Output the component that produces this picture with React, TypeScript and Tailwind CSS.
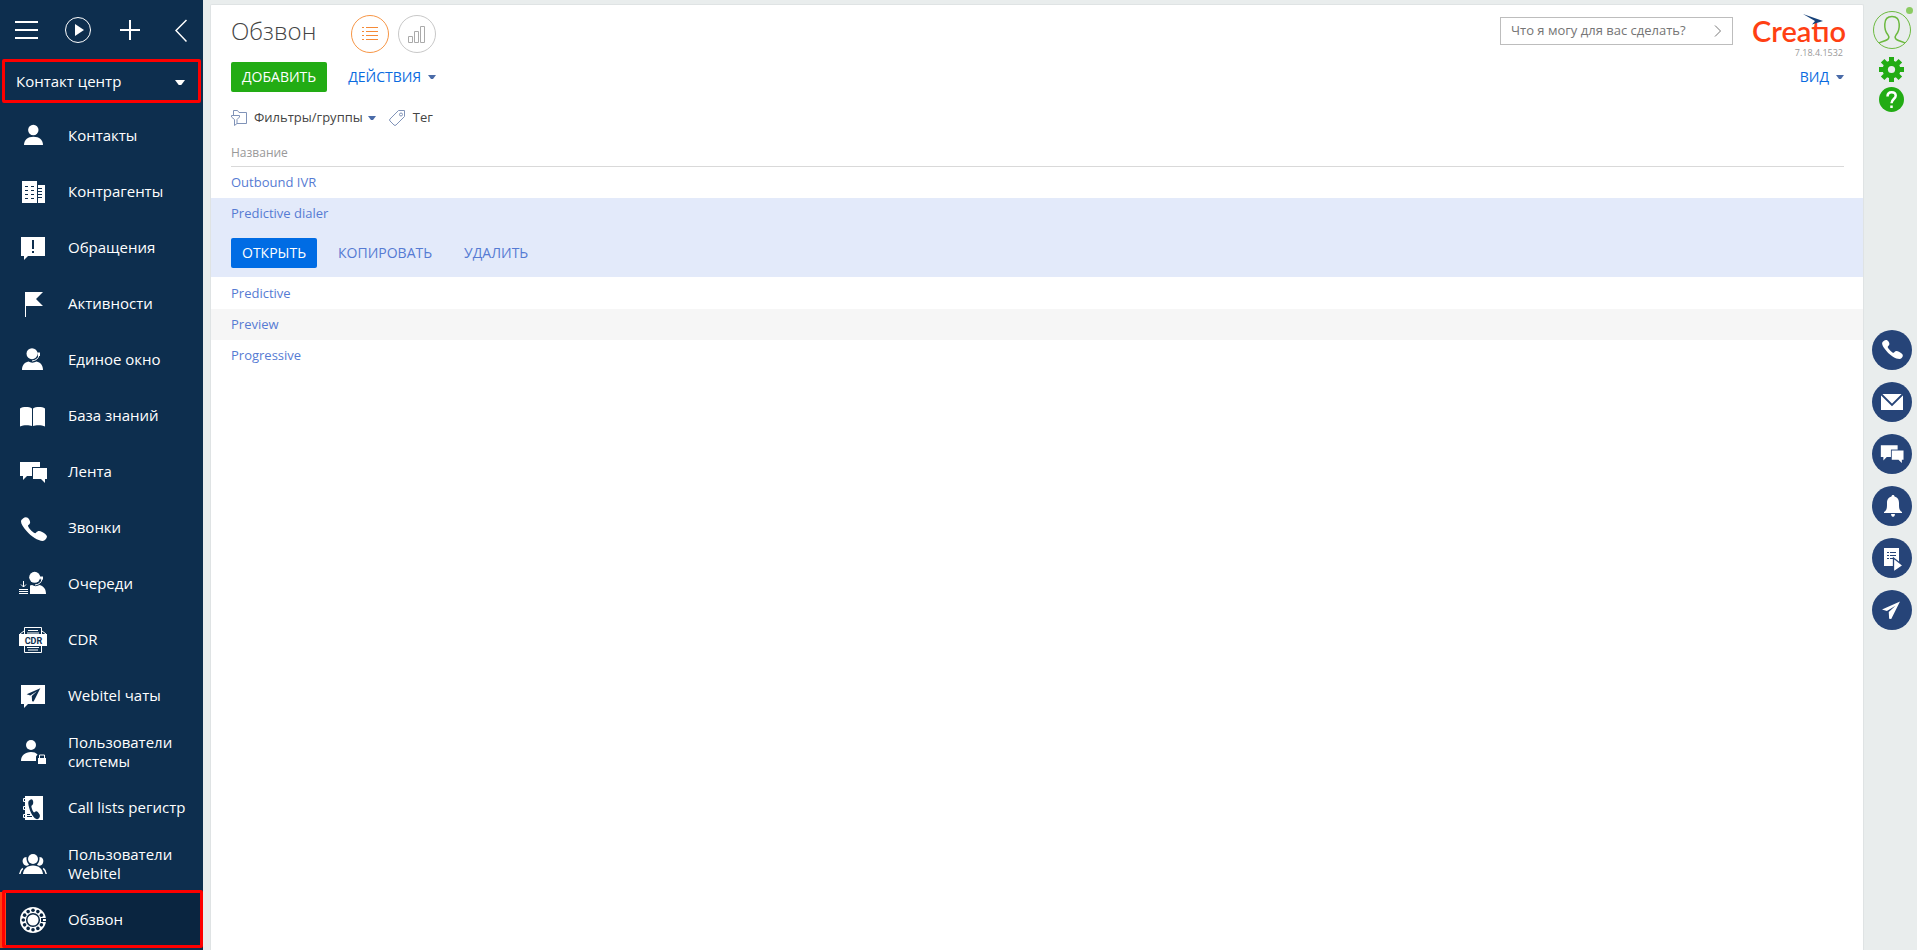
import React from 'react';

type IconProps = { children: React.ReactNode };

const NavIcon: React.FC<IconProps> = ({ children }) => (
  <svg className="w-7 h-7 shrink-0" viewBox="0 0 28 28" fill="#fff" aria-hidden="true">
    {children}
  </svg>
);

const PHONE = 'M4 4.5C6 2.6 8.6 2.6 10.2 5.4c1.4 2.4 1.3 4-.8 5.6-.7.6-.4 1.5.8 3.2 1.3 1.8 2.9 3.3 4.7 4.5 1 .6 1.7.6 2.3-.2 1.6-1.9 3.3-2 5.9-.6 2.9 1.6 5.3 3.3 4.8 5.2-.4 1.7-2 3.9-4.2 3.9-4.7 0-11.7-4.6-15.7-9.4C4.2 13 2 9.8 2 7.4 2 6.2 2.9 5.4 4 4.5z';
const PLANE = 'M26 2L2 12.5l6.5 2.3L20 7.5 11 16l.5 9 2.8.3L26 2z';
const DARK = '#0d2e4e';

const dialHoles = Array.from({ length: 11 }, (_, i) => {
  const a = ((i + 1) * Math.PI) / 6;
  return { x: 14 + 9.7 * Math.cos(a), y: 14 + 9.7 * Math.sin(a) };
});

const Chats = ({ gap }: { gap: string }) => (
  <>
    <path d="M1 4h20v14H8l-4 4v-4H1z" />
    <path d="M13 9h16v13H13z" fill={gap} />
    <path d="M14 10h14v11h-2v4l-4-4h-8z" />
  </>
);

const NAV = [
  {
    label: 'Контакты',
    icon: <><circle cx="14.3" cy="8" r="5.2" /><path d="M5 23c0-5 3.5-8.3 9.5-8.3S24 18 24 23z" /></>,
  },
  {
    label: 'Контрагенты',
    icon: (
      <>
        <path d="M3 3h15v22H3zM19 7h7v18h-7z" />
        <path
          d="M6 8.5h3m3 0h3M6 12.5h3m3 0h3M6 16.5h3m3 0h3M6 20.5h3m3 0h3M19 10.5h4m-4 3h4m-4 3h4m-4 3h4"
          stroke={DARK}
        />
      </>
    ),
  },
  {
    label: 'Обращения',
    icon: <><path d="M2 3h24v19H9l-4 4v-4H2z" /><path d="M13 6h2v9h-2zM13 17h2v2h-2z" fill={DARK} /></>,
  },
  { label: 'Активности', icon: <path d="M6 2h18l-7 7 7 7H7v11H6z" /> },
  {
    label: 'Единое окно',
    icon: (
      <>
        <circle cx="13" cy="7.7" r="5.5" />
        <path d="M3 24c0-5 2.5-7.5 6.5-8.5 2 1.5 5.5 1.5 8 0C21.5 16.5 24 19 24 24z" />
        <path d="M18 6.5h3V10h-2z" />
        <path d="M20 9c-.5 3.5-3 5.5-7 6" fill="none" stroke="#fff" />
      </>
    ),
  },
  {
    label: 'База знаний',
    icon: <path d="M1 6.5C4 4.6 10 4.6 13 6.5V24c-3-1-9-1-12 .5zM14 6.5c3-1.9 9-1.9 12 0v18c-3-1.5-9-1.5-12-.5z" />,
  },
  { label: 'Лента', icon: <Chats gap={DARK} /> },
  { label: 'Звонки', icon: <path d={PHONE} /> },
  {
    label: 'Очереди',
    icon: (
      <>
        <circle cx="15.7" cy="7.3" r="5.5" />
        <path d="M11 24v-8.5l2-.5c2 1.5 5.5 1.5 7.5 0 4.5 1.5 6.5 4 6.5 9z" />
        <path d="M20.5 6.5H24v3h-2.5z" />
        <path d="M23 9c-.5 3.5-3 5.5-7 6M4.5 11v6M2 14.5L4.5 17 7 14.5M0 19.5h9M0 21.5h9M0 23.5h9" fill="none" stroke="#fff" />
      </>
    ),
  },
  {
    label: 'CDR',
    icon: (
      <>
        <path d="M5.5 1.5h17v25h-17zM9 4.5h10M8 7h12M8 21.5h12M9 24h10M1 8l4-3M27 8l-4-3" fill="none" stroke="#fff" />
        <path d="M0 8h28v12H0z" />
        <text x="14.5" y="17.5" fontSize="9" fontWeight="700" fontFamily="Roboto, sans-serif" textAnchor="middle" fill={DARK}>CDR</text>
      </>
    ),
  },
  {
    label: 'Webitel чаты',
    icon: (
      <>
        <path d="M2 3h24v19H9l-4 4v-4H2z" />
        <path d={PLANE} fill={DARK} transform="translate(6.5 5) scale(.57)" />
      </>
    ),
  },
  {
    label: 'Пользователи системы',
    icon: (
      <>
        <circle cx="12" cy="7" r="5" />
        <path d="M2 23c0-5.5 4-9 10-9 3 0 5 .8 6.5 2.5L17 18.5V23zM19 20h8v6h-8z" />
        <path d="M20.5 20v-3h5v3" fill="none" stroke="#fff" />
      </>
    ),
  },
  {
    label: 'Call lists регистр',
    icon: (
      <>
        <path d="M6 2h18v24H6z" />
        <path d="M6 4.5H4.5v3H6M6 12.5H4.5v3H6M6 20.5H4.5v3H6" fill="none" stroke="#fff" />
        <path d={PHONE} fill={DARK} transform="translate(9.5 2) rotate(12) scale(.55 .78)" />
        <path d="M8 20.5h3M8 22.5h5" stroke={DARK} />
      </>
    ),
  },
  {
    label: 'Пользователи Webitel',
    icon: (
      <>
        <circle cx="14" cy="9" r="5" />
        <path d="M4 24c.5-5 4-8.5 10-8.5S23.5 19 24 24zM7.5 7C4 7 3 10.5 4 13c1 2.5 3 3 4.5 2.5 1-.3 1.5-1 1.5-1C8 12.5 7.3 10 7.5 7zM20.5 7c3.5 0 4.5 3.5 3.5 6-1 2.5-3 3-4.5 2.5-1-.3-1.5-1-1.5-1 2-2 2.7-4.5 2.5-7.5z" />
        <path d="M.8 24c.3-2.5 1.5-4.5 3-5.7M27.2 24c-.3-2.5-1.5-4.5-3-5.7" fill="none" stroke="#fff" strokeWidth="1.5" />
      </>
    ),
  },
  {
    label: 'Обзвон',
    active: true,
    icon: (
      <>
        <circle cx="14" cy="14" r="13" />
        <circle cx="14" cy="14" r="6.3" fill="none" stroke="#0a2540" strokeWidth="1.5" />
        {dialHoles.map((h) => (
          <circle key={`${h.x}-${h.y}`} cx={h.x} cy={h.y} r="1.8" fill="#0a2540" />
        ))}
        <path d="M22 12h6v1h-4v2h4v1h-6z" fill="#0a2540" />
      </>
    ),
  },
];

const CHANNELS = [
  { label: 'Звонки', icon: <path d={PHONE} transform="translate(2.5 1.5) scale(.8)" /> },
  {
    label: 'Почта',
    icon: <><path d="M3 6h22v16H3z" /><path d="M3 6l11 11L25 6" fill="none" stroke="#264478" strokeWidth="1.8" /></>,
  },
  { label: 'Чаты', icon: <g transform="translate(2 2) scale(.84)"><Chats gap="#264478" /></g> },
  {
    label: 'Уведомления',
    icon: <path d="M15 3c1 0 1.5.7 1.5 1.5C20 5.5 21 8 21 11c0 5 0 7 3 9v1H6v-1c3-2 3-4 3-9 0-3 1-5.5 4.5-6.5C13.500 3.700 14 3 15 3zM13 22h4l-.5 2-1.500 1-1.500-1z" />,
  },
  {
    label: 'Процессы',
    icon: (
      <>
        <path d="M6 4h15v18H6z" />
        <path d="M9 8.5h2m1 0h6M9 11.5h2m1 0h6M9 14.5h2m1 0h4" stroke="#264478" />
        <path d="M15.5 14v14l9.5-6.500z" stroke="#264478" strokeWidth="1.3" />
      </>
    ),
  },
  { label: 'Сообщения', icon: <path d={PLANE} transform="translate(2.5 4) scale(.75)" /> },
];

const Caret: React.FC<{ className: string }> = ({ className }) => (
  <svg className={className} viewBox="0 0 8 4" fill="currentColor" aria-hidden="true">
    <path d="M0 0h8L5 4H3z" />
  </svg>
);

const Sidebar: React.FC = () => (
  <aside className="w-[203px] shrink-0 bg-[#0d2e4e] text-white">
    <div className="h-[59px] flex items-center pl-[15px] pr-4 justify-between">
      <button aria-label="Меню">
        <svg className="w-6 h-7 block" viewBox="0 0 24 28" stroke="#fff" strokeWidth="2"><path d="M0 6h23M0 14h23M0 22h23" /></svg>
      </button>
      <button aria-label="Запустить процесс">
        <svg className="w-7 h-7 block" viewBox="0 0 28 28" fill="none">
          <circle cx="14" cy="14" r="12.5" stroke="#fff" />
          <path d="M11 8v12l9-6z" fill="#fff" />
        </svg>
      </button>
      <button aria-label="Добавить">
        <svg className="w-6 h-7 block" viewBox="0 0 24 28" stroke="#fff" strokeWidth="2"><path d="M2 14h20M12 4v20" /></svg>
      </button>
      <button aria-label="Свернуть" className="ml-2">
        <svg className="w-3 h-7 block" viewBox="0 0 12 28" fill="none" stroke="#fff" strokeWidth="1.5"><path d="M11.5 4L1 14.500l10.500 11" /></svg>
      </button>
    </div>
    <div className="relative mx-0.5 mb-[5px]">
      <select
        aria-label="Рабочее место"
        className="block w-full h-11 appearance-none rounded-xs border-[3px] border-[#fe0000] bg-transparent pt-px pl-[11px] text-[15px] outline-none"
      >
        <option>Контакт центр</option>
      </select>
      <Caret className="absolute right-4 top-[21px] w-2.5 h-[5px] pointer-events-none" />
    </div>
    <nav>
      {NAV.map((item) => (
        <a
          key={item.label}
          href="#"
          className={
            item.active
              ? 'relative h-14 flex items-center gap-[21px] pl-[19px] pr-2 bg-[#0a2540] text-[15px] leading-[19px]'
              : 'h-14 flex items-center gap-[21px] pl-[19px] pr-2 text-[15px] leading-[19px]'
          }
        >
          {item.active && (
            <>
              <span className="absolute left-0 inset-y-0 w-1.5 bg-[#ff4013]" />
              <span className="absolute left-0.5 right-0 -top-0.5 bottom-0 rounded-xs border-[3px] border-[#fe0000]" />
            </>
          )}
          <NavIcon>{item.icon}</NavIcon>
          <span className="pb-px">{item.label}</span>
        </a>
      ))}
    </nav>
  </aside>
);

const Logo: React.FC = () => (
  <div className="relative w-[92px]">
    <div className="font-['Lato',sans-serif] font-semibold text-[29px] leading-7 text-[#ff4013]">Creatio</div>
    {/* the bird stands in for the dot of the "i" */}
    <svg className="absolute left-[50px] -top-1 w-7 h-3.5" viewBox="0 0 28 14" aria-hidden="true">
      <path d="M17 2h11v11H17z" fill="#fff" />
      <path d="M1 1l20 7-11 3.500 3-3.500z" fill="#17427a" />
    </svg>
    <div className="text-[9px] leading-3 mt-0.5 pr-px text-right text-[#999]">7.18.4.1532</div>
  </div>
);

const Header: React.FC = () => (
  <header className="pl-5 pr-[19px]">
    <div className="h-[57px] flex items-start">
      <h1 className="w-[85px] text-2xl leading-[34px] mt-[9px] font-light text-[#444]">Обзвон</h1>
      <button aria-label="Реестр" className="ml-[35px] mt-2.5 w-[38px] h-[38px] rounded-full border border-[#f79646] text-[#f58a37]">
        <svg className="w-9 h-9" viewBox="0 0 36 36" stroke="currentColor" fill="none">
          <path d="M10 11.5h2m2 0h12M10 15.5h2m2 0h12M10 19.5h2m2 0h12M10 23.5h2m2 0h12" />
        </svg>
      </button>
      <button aria-label="Аналитика" className="ml-[9px] mt-2.5 w-[38px] h-[38px] rounded-full border border-[#c8c8c8] text-[#aaa]">
        <svg className="w-9 h-9" viewBox="0 0 36 36" stroke="currentColor" fill="none">
          <path d="M9.5 20.5h4v6h-4zM15.5 15.5h4v11h-4zM21.5 10.5h4v16h-4z" />
        </svg>
      </button>
      <div className="ml-auto mt-3 w-[233px] h-7 flex items-center border border-[#bdbdbd] px-2.5">
        <input
          aria-label="Командная строка"
          placeholder="Что я могу для вас сделать?"
          className="min-w-0 flex-1 text-[13px] outline-none placeholder:text-[#757575]"
        />
        <svg className="w-2 h-3" viewBox="0 0 8 12" fill="none" stroke="#777"><path d="M1 .5L6.5 6 1 11.5" /></svg>
      </div>
      <div className="ml-[19px] mt-3"><Logo /></div>
    </div>

    <div className="h-[30px] flex items-center text-sm text-[#0a6be0]">
      <button className="h-[30px] px-[11px] rounded-xs bg-[#22ac14] text-white">ДОБАВИТЬ</button>
      <button className="ml-[21px] flex items-center gap-[7px]">
        ДЕЙСТВИЯ <Caret className="w-2 h-1 text-[#4a6ba8]" />
      </button>
      <button className="ml-auto flex items-center gap-[7px]">
        ВИД <Caret className="w-2 h-1 text-[#4a6ba8]" />
      </button>
    </div>

    <div className="h-[52px] flex items-center text-[13px] text-[#444]">
      <button className="flex items-center">
        <svg className="w-4 h-4 mr-[7px]" viewBox="0 0 16 16" fill="none" stroke="#8093b8">
          <path d="M2.5 5V.5h4l1.500 2h7.500v11H6" />
          <path d="M.5 5.5h8V7L6 9.500v4l-2.500 2v-6L.5 7z" fill="#fff" />
        </svg>
        Фильтры/группы
        <Caret className="w-2 h-1 ml-[5px] text-[#4a6ba8]" />
      </button>
      <button className="ml-[13px] flex items-center">
        <svg className="w-4 h-4 mr-2" viewBox="0 0 16 16" fill="none" stroke="#8093b8">
          <path d="M9.500.500h6v6L7 15q-1 1-2 0L1 11q-1-1 0-2z" />
          <circle cx="12" cy="4.5" r="1.5" />
        </svg>
        Тег
      </button>
    </div>
  </header>
);

const RowLink: React.FC<{ name: string }> = ({ name }) => (
  <a href="#" className="block h-[31px] leading-[31px] text-[13px]">{name}</a>
);

const Registry: React.FC = () => (
  <table className="w-full text-left text-[#567bd3]">
    <thead>
      <tr>
        <th className="pl-5 pr-[19px] font-normal">
          <div className="h-[23px] leading-[18px] border-b border-[#d9d9d9] text-xs text-[#999]">Название</div>
        </th>
      </tr>
    </thead>
    <tbody>
      <tr><td className="px-5"><RowLink name="Outbound IVR" /></td></tr>
      <tr className="bg-[#e3eafa]">
        <td className="px-5">
          <RowLink name="Predictive dialer" />
          <div className="h-12 pt-[9px] flex text-sm">
            <button className="h-[30px] px-[11px] rounded-xs bg-[#006ce4] text-white">ОТКРЫТЬ</button>
            <button className="h-[30px] ml-[21px]">КОПИРОВАТЬ</button>
            <button className="h-[30px] ml-8">УДАЛИТЬ</button>
          </div>
        </td>
      </tr>
      <tr><td className="px-5 pt-px"><RowLink name="Predictive" /></td></tr>
      <tr className="bg-[#f6f6f6]"><td className="px-5"><RowLink name="Preview" /></td></tr>
      <tr><td className="px-5"><RowLink name="Progressive" /></td></tr>
    </tbody>
  </table>
);

const RightPanel: React.FC = () => (
  <aside className="w-[53px] shrink-0 flex flex-col items-center pt-[11px] pl-0.5">
    <button aria-label="Профиль" className="relative">
      <svg className="w-[38px] h-[38px] block" viewBox="0 0 38 38" fill="none" stroke="#6cb93f">
        <circle cx="19" cy="19" r="18.5" />
        <path d="M6 32c2-1.500 8-2 9.500-4.500.5-1 .3-2.500-.5-3.500-2.500-3-3.500-7-3.200-11C12 8 15 5.500 19 5.500s7 2.500 7.200 7.500c.3 4-.7 8-3.200 11-.8 1-1 2.500-.5 3.500C24 30 30 30.500 32 32" strokeWidth="1.5" />
      </svg>
      <span className="absolute -right-0.5 -top-1 w-[7px] h-[7px] rounded-full bg-[#8bcb62]" />
    </button>
    <button aria-label="Настройки" className="mt-2">
      <svg className="w-[25px] h-[25px] block" viewBox="0 0 25 25">
        <g fill="#22ac14">
          <circle cx="12.5" cy="12.5" r="9" />
          {[0, 45, 90, 135].map((a) => (
            <path key={a} d="M10 0h5v25h-5z" transform={`rotate(${a} 12.5 12.5)`} />
          ))}
        </g>
        <circle cx="12.5" cy="12.5" r="3.6" fill="#e9eded" />
      </svg>
    </button>
    <button aria-label="Справка" className="mt-[5px] w-[25px] h-[25px] rounded-full bg-[#22ac14]">
      <svg className="w-[25px] h-[25px] block" viewBox="0 0 25 25" fill="none" stroke="#fff" strokeWidth="2.5">
        <path d="M8.500 9.500c0-3 1.800-4.300 4.200-4.300 2.300 0 4 1.400 4 3.500 0 3.300-4.200 3.300-4.200 7.500M12.500 18.500V21" />
      </svg>
    </button>
    <div className="mt-[218px] flex flex-col gap-3">
      {CHANNELS.map((c) => (
        <button
          key={c.label}
          aria-label={c.label}
          className="w-10 h-10 rounded-full bg-[#264478] flex items-center justify-center"
        >
          <NavIcon>{c.icon}</NavIcon>
        </button>
      ))}
    </div>
  </aside>
);

const App: React.FC = () => (
  <div className="min-h-screen flex bg-[#e9eded] font-['Open_Sans','Noto_Sans',sans-serif]">
    <Sidebar />
    <main className="flex-1 min-w-0 ml-[7px] mt-1 bg-white border border-b-0 border-[#dfe3e4] rounded-t-xs">
      <Header />
      <Registry />
    </main>
    <RightPanel />
  </div>
);

export default App;
